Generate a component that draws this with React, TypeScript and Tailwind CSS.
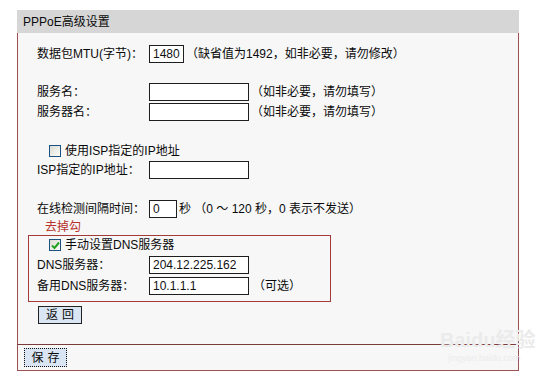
import React from "react";

function Box({ w, value }: { w: string; value?: string }) {
  return (
    <div
      className={`${w} h-[18px] shrink-0 border border-[#1e1e1e] bg-white pl-[3px] flex items-center text-[12px] leading-none text-[#111]`}
    >
      {value}
    </div>
  );
}

function Check({ checked }: { checked?: boolean }) {
  return (
    <div className="w-[12px] h-[12px] shrink-0 border border-[#1c5180] bg-gradient-to-br from-[#dcdcd6] to-[#fbfbf9] flex items-center justify-center">
      {checked && (
        <svg width="9" height="9" viewBox="0 0 9 9">
          <path d="M1 4.5 L3.5 7 L8 1.5" stroke="#21a121" strokeWidth="2" fill="none" />
        </svg>
      )}
    </div>
  );
}

function Row({ label, children, cls = "h-[20px]" }: { label: string; children?: React.ReactNode; cls?: string }) {
  return (
    <div className={`flex items-center ${cls} pl-[9px]`}>
      <span className="w-[112px] shrink-0">{label}</span>
      {children}
    </div>
  );
}

export default function App() {
  return (
    <div className="w-[552px] h-[377px] bg-white relative overflow-hidden font-['Liberation_Sans','Noto_Sans_CJK_SC',sans-serif] text-[12px] leading-none text-[#0a0a0a]">
      <div className="ml-[17px] mt-[10px] w-[502px] h-[361px] flex flex-col border-x border-b border-[#9c5050] bg-[#f7f7f7]">
        <div className="h-[23px] shrink-0 bg-[#d6d6d6] flex items-center pl-[6px] -mx-px">PPPoE高级设置</div>
        <div className="flex flex-col px-[10px]">
          <Row label="数据包MTU(字节)：" cls="h-[20px] mt-[11px]">
            <Box w="w-[35px]" value="1480" />
            <span className="ml-[2px]">（缺省值为1492，如非必要，请勿修改）</span>
          </Row>
          <Row label="服务名：" cls="h-[20px] mt-[18px]">
            <Box w="w-[100px]" />
            <span className="ml-[2px]">（如非必要，请勿填写）</span>
          </Row>
          <Row label="服务器名：" cls="h-[20px]">
            <Box w="w-[100px]" />
            <span className="ml-[2px]">（如非必要，请勿填写）</span>
          </Row>
          <div className="flex items-center h-[18px] mt-[20px] pl-[21px] gap-[4px]">
            <Check />
            <span>使用ISP指定的IP地址</span>
          </div>
          <Row label="ISP指定的IP地址：" cls="h-[20px]">
            <Box w="w-[100px]" />
          </Row>
          <Row label="在线检测间隔时间：" cls="h-[20px] mt-[19px]">
            <Box w="w-[28px]" value="0" />
            <span className="ml-[2px]">秒 （0 ～ 120 秒，0 表示不发送）</span>
          </Row>
          <div className="h-[16px] flex items-center pl-[17px] text-[#b8322c]">去掉勾</div>
          <div className="w-[303px] h-[67px] border border-[#a33a3a] flex flex-col">
            <div className="flex items-center h-[18px] pl-[20px] gap-[4px]">
              <Check checked />
              <span>手动设置DNS服务器</span>
            </div>
            <div className="flex items-center h-[20px] mt-[1px] pl-[8px]">
              <span className="w-[112px] shrink-0">DNS服务器：</span>
              <Box w="w-[100px]" value="204.12.225.162" />
            </div>
            <div className="flex items-center h-[20px] mt-[1px] pl-[8px]">
              <span className="w-[112px] shrink-0">备用DNS服务器：</span>
              <Box w="w-[100px]" value="10.1.1.1" />
              <span className="ml-[4px]">（可选）</span>
            </div>
          </div>
          <div className="mt-[4px] ml-[10px] w-[44px] h-[18px] border border-[#222] bg-[#d9e5f2] flex items-center justify-center tracking-[4px] pl-[4px]">
            返回
          </div>
        </div>
        <div className="mt-[20px] h-px bg-[#7b3b3b] -mx-px" />
        <div className="ml-[6px] mt-[3px] w-[43px] h-[19px] border border-dotted border-[#111] bg-[#d9e5f2] flex items-center justify-center tracking-[4px] pl-[4px]">
          保存
        </div>
      </div>
      <div className="absolute left-[440px] top-[330px] text-[20px] font-bold text-[#ebebeb] pointer-events-none">Baidu经验</div>
      <div className="absolute left-[448px] top-[354px] text-[9px] text-[#ececec] pointer-events-none">jingyan.baidu.com</div>
    </div>
  );
}
